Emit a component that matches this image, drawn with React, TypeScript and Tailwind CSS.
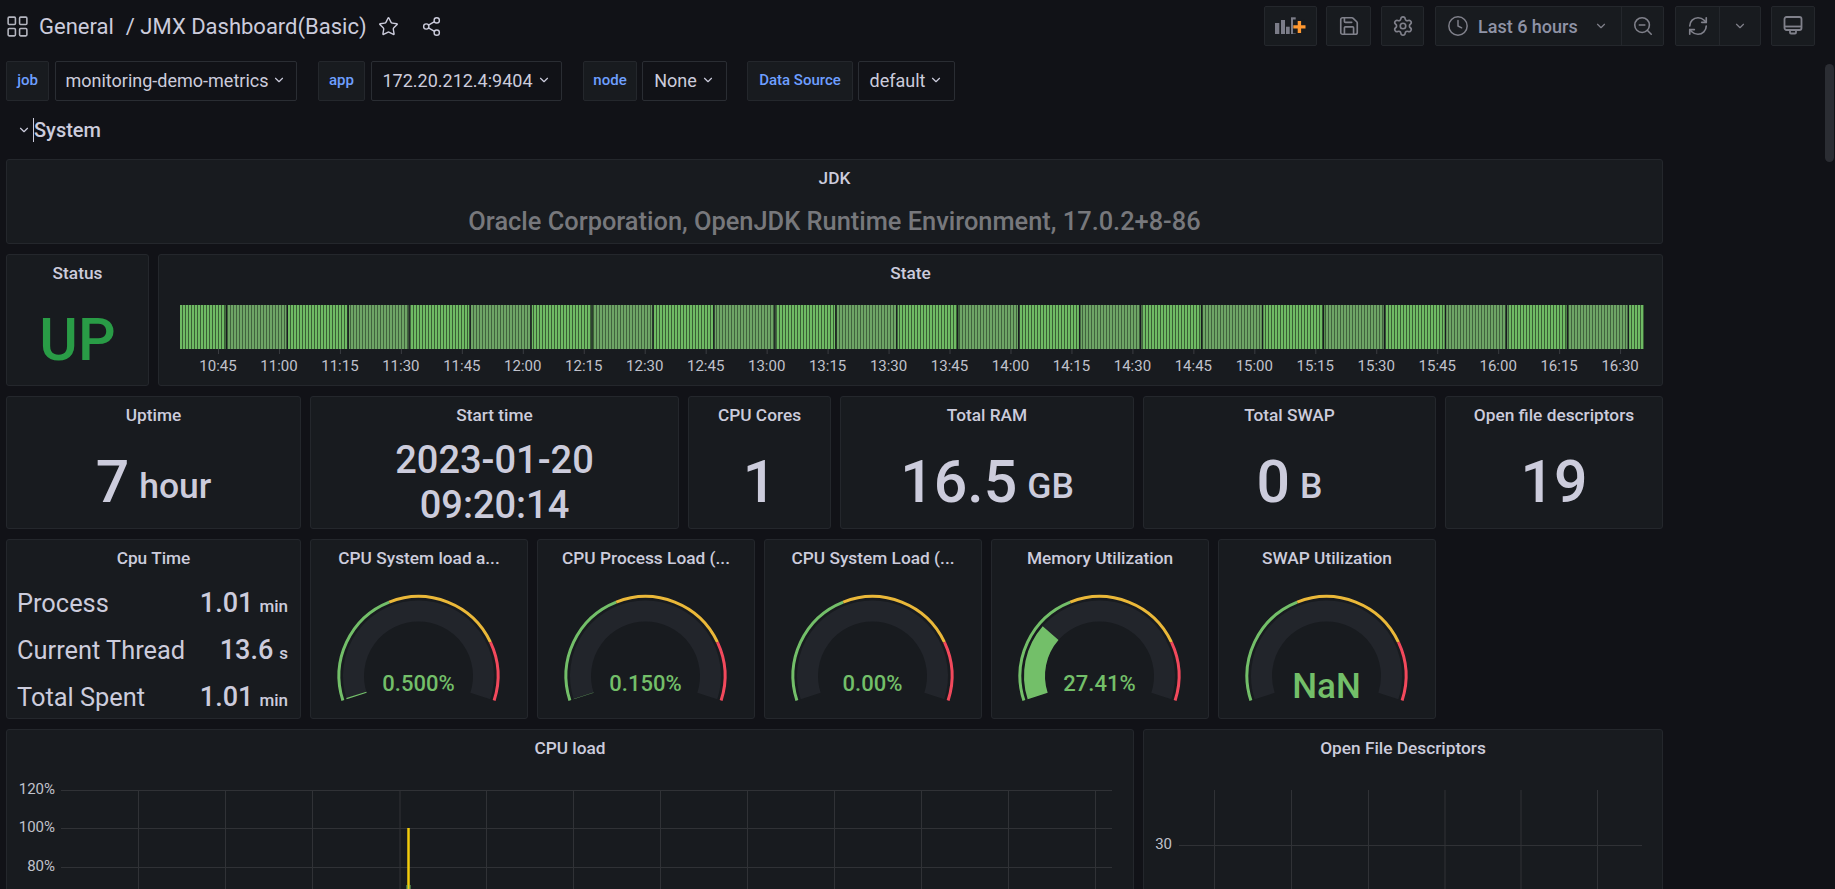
import React, { type FC, type ReactNode } from "react";
import { ChevronDown, LayoutGrid, RefreshCw, Save, Settings, Share2, Star, Clock, ZoomOut } from "lucide-react";

const times = ["10:45","11:00","11:15","11:30","11:45","12:00","12:15","12:30","12:45","13:00","13:15","13:30","13:45","14:00","14:15","14:30","14:45","15:00","15:15","15:30","15:45","16:00","16:15","16:30"];

const Panel: FC<{ title: string; className: string; children?: ReactNode }> = ({ title, className, children }) => (
  <div className={`flex flex-col overflow-hidden rounded-[3px] border border-[#24272c] bg-[#181b1f] ${className}`}>
    <div className="h-[38px] shrink-0 flex items-center justify-center text-[17.3px] font-medium text-[#ccccdc]">{title}</div>
    {children}
  </div>
);

const Stat: FC<{ title: string; className: string; value: string; unit?: string }> = ({ title, className, value, unit }) => (
  <Panel title={title} className={className}>
    <div className="flex-1 flex items-center justify-center font-medium text-[#ccccdc]">
      <span className="text-[59px] leading-none">{value}</span>
      {unit && <span className="ml-[10px] self-center mt-[11px] text-[35.5px] leading-none">{unit}</span>}
    </div>
  </Panel>
);

const CpuRow: FC<{ name: string; value: string; unit: string }> = ({ name, value, unit }) => (
  <div className="flex items-center justify-between h-[47px]">
    <span className="text-[25.4px] text-[#ccccdc]">{name}</span>
    <span className="font-medium text-[#ccccdc]">
      <span className="text-[27px]">{value}</span>
      <span className="ml-[6px] text-[17px]">{unit}</span>
    </span>
  </div>
);

const point = (r: number, deg: number) => {
  const a = (deg * Math.PI) / 180;
  return `${107.5 + r * Math.cos(a)} ${98 + r * Math.sin(a)}`;
};

const arc = (r: number, from: number, to: number) => {
  const a = 162 + 216 * from;
  const b = 162 + 216 * to;
  return `M${point(r, a)} A${r} ${r} 0 ${b - a > 180 ? 1 : 0} 1 ${point(r, b)}`;
};

const Gauge: FC<{ title: string; value: string; pct: number; big?: boolean }> = ({ title, value, pct, big }) => (
  <Panel title={title} className="w-[218px]">
    <svg width="216" height="140" className="shrink-0">
      <path d={arc(65, 0, 1)} fill="none" stroke="#22252b" strokeWidth="21" />
      {pct > 0 && <path d={arc(65, 0, pct)} fill="none" stroke="#73bf69" strokeWidth="21" />}
      <path d={arc(79.5, 0, 0.4)} fill="none" stroke="#73bf69" strokeWidth="3" />
      <path d={arc(79.5, 0.4, 0.8)} fill="none" stroke="#eab839" strokeWidth="3" />
      <path d={arc(79.5, 0.8, 1)} fill="none" stroke="#f2495c" strokeWidth="3" />
      <text
        x="107.5"
        y={big ? 108 : 105}
        textAnchor="middle"
        dominantBaseline="central"
        fill="#73bf69"
        className={big ? "text-[35px] font-medium" : "text-[22px] font-medium"}
      >
        {value}
      </text>
    </svg>
  </Panel>
);

const Timeline: FC = () => {
  const stripes = [];
  for (let x = 21; x < 1484; x += 3) {
    const seg = Math.floor((x - 67) / 60.96);
    const bright = seg % 2 !== 0;
    stripes.push(<rect key={x} x={x} y={12} width={3} height={44} fill={bright ? "#3a6035" : "#41633e"} />);
    stripes.push(<rect key={`s${x}`} x={x} y={12} width={2} height={44} fill={bright ? "#6fbb64" : "#6ea566"} />);
  }
  const seps = [];
  for (let i = 0; i < 24; i++) seps.push(<rect key={i} x={66.5 + i * 60.96} y={12} width={1.5} height={44} fill="#181b1f" />);
  return (
    <svg width="1503" height="92" className="shrink-0">
      {stripes}
      {seps}
      {times.map((t, i) => (
        <g key={t}>
          <rect x={59 + i * 60.96} y={56} width={1} height={5} fill="#3a3c41" />
          <text x={59 + i * 60.96} y={73} textAnchor="middle" dominantBaseline="central" fill="#c0c2cc" className="text-[15px]">
            {t}
          </text>
        </g>
      ))}
    </svg>
  );
};

const CpuChart: FC = () => {
  const rows = [
    { y: 22, label: "120%" },
    { y: 60, label: "100%" },
    { y: 99, label: "80%" },
  ];
  const cols = [131, 218, 305, 392.5, 479, 566, 653, 740, 827, 914, 1001, 1088];
  return (
    <svg width="1126" height="130" className="shrink-0">
      {rows.map((r) => (
        <g key={r.y}>
          <line x1="54" x2="1105" y1={r.y + 0.5} y2={r.y + 0.5} stroke="#303236" />
          <text x="48" y={r.y - 1} textAnchor="end" dominantBaseline="central" fill="#c0c2cc" className="text-[15px]">
            {r.label}
          </text>
        </g>
      ))}
      {cols.map((x) => (
        <line key={x} x1={x + 0.5} x2={x + 0.5} y1="22" y2="130" stroke="#303236" />
      ))}
      <line x1="401.5" x2="401.5" y1="60" y2="130" stroke="#f2cc0c" strokeWidth="2.5" />
      <line x1="400" x2="400" y1="117" y2="130" stroke="#73bf69" strokeWidth="1" />
      <line x1="403" x2="403" y1="117" y2="130" stroke="#73bf69" strokeWidth="1" />
    </svg>
  );
};

const FileChart: FC = () => (
  <svg width="518" height="130" className="shrink-0">
    <line x1="35" x2="498" y1="77.5" y2="77.5" stroke="#303236" />
    {[70, 147, 224, 300.5, 376.5, 453].map((x) => (
      <line key={x} x1={x + 0.5} x2={x + 0.5} y1="22" y2="130" stroke="#303236" />
    ))}
    <text x="28" y="76" textAnchor="end" dominantBaseline="central" fill="#c0c2cc" className="text-[15px]">
      30
    </text>
  </svg>
);

const VarItem: FC<{ label: string; value: string; className: string; labelW: string; selectW: string }> = ({ label, value, className, labelW, selectW }) => (
  <div className={`flex h-[40px] ${className}`}>
    <div className={`flex items-center justify-center pb-[2px] rounded-[2px] border border-[#24272c] bg-[#181b1f] text-[15px] font-medium text-[#6e9fff] ${labelW}`}>{label}</div>
    <div className={`ml-auto flex items-center justify-center gap-[4px] pb-[2px] rounded-[2px] border border-[#2a2d33] text-[18px] text-[#ccccdc] ${selectW}`}>
      {value}
      <ChevronDown size={14} strokeWidth={2} />
    </div>
  </div>
);

const btn = "flex items-center justify-center h-[40px] rounded-[2px] border border-[#24272c] bg-[#181b1f] text-[#80818b]";

const App: FC = () => {
  return (
    <div className="relative h-[889px] overflow-hidden bg-[#111217] font-['Roboto',sans-serif]">
      <div className="flex items-center h-[46px] pt-[6px] pl-[5px] pr-[20px] text-[#ccccdc]">
        <LayoutGrid size={25} strokeWidth={1.5} className="text-[#b5b6c0]" />
        <span className="ml-[9px] text-[22px]">General</span>
        <span className="ml-[12px] text-[22px]">/ JMX Dashboard(Basic)</span>
        <Star size={21} strokeWidth={1.6} className="ml-[11px]" />
        <Share2 size={21} strokeWidth={1.6} className="ml-[22px]" />
        <div className="ml-auto flex">
          <div className={`${btn} w-[53px]`}>
            <svg width="51" height="38" viewBox="1 1 51 38">
              <rect x="11" y="17" width="4.3" height="11" fill="#7b7c88" />
              <rect x="17" y="14" width="4" height="14" fill="#7b7c88" />
              <rect x="22" y="20.7" width="3.7" height="7.3" fill="#7b7c88" />
              <rect x="27" y="11.3" width="4.7" height="16.7" fill="#7b7c88" />
              <rect x="29" y="13.5" width="12" height="14" fill="#181b1f" />
              <path d="M33.7 15h3.4v4.2h4.4v3.4h-4.4v4.4h-3.4v-4.4h-4.4v-3.4h4.4z" fill="#ff9830" />
            </svg>
          </div>
          <div className={`${btn} w-[45px] ml-[9px]`}>
            <Save size={22} strokeWidth={1.8} />
          </div>
          <div className={`${btn} w-[43px] ml-[10px]`}>
            <Settings size={22} strokeWidth={1.8} />
          </div>
          <div className={`${btn} w-[229px] ml-[11px] justify-start`}>
            <div className="flex items-center w-[186px] pl-[11px] border-r border-[#24272c] h-full">
              <Clock size={22} strokeWidth={1.6} />
              <span className="ml-[9px] text-[18px] font-medium text-[#8f93a6]">Last 6 hours</span>
              <ChevronDown size={14} strokeWidth={2} className="ml-[16px]" />
            </div>
            <div className="flex-1 flex items-center justify-center">
              <ZoomOut size={22} strokeWidth={1.7} />
            </div>
          </div>
          <div className={`${btn} w-[86px] ml-[11px] justify-start`}>
            <div className="flex items-center justify-center w-[44px] border-r border-[#24272c] h-full">
              <RefreshCw size={22} strokeWidth={1.8} />
            </div>
            <div className="flex-1 flex items-center justify-center">
              <ChevronDown size={14} strokeWidth={2} />
            </div>
          </div>
          <div className={`${btn} w-[44px] ml-[10px]`}>
            <svg width="24" height="24" viewBox="0 0 24 24" fill="none" stroke="currentColor" strokeWidth="1.8">
              <rect x="3.5" y="3" width="17" height="13" rx="2" />
              <line x1="3.5" x2="20.5" y1="12.5" y2="12.5" />
              <path d="M9 16v2.5a1 1 0 0 0 1 1h4a1 1 0 0 0 1-1V16" />
            </svg>
          </div>
        </div>
      </div>

      <div className="flex mt-[15px] pl-[6px] gap-[21px]">
        <VarItem label="job" value="monitoring-demo-metrics" className="w-[291px]" labelW="w-[43px]" selectW="w-[242px]" />
        <VarItem label="app" value="172.20.212.4:9404" className="w-[244px]" labelW="w-[47px]" selectW="w-[191px]" />
        <VarItem label="node" value="None" className="w-[144px] mr-[-1px]" labelW="w-[54px]" selectW="w-[85px]" />
        <VarItem label="Data Source" value="default" className="w-[208px]" labelW="w-[106px]" selectW="w-[97px]" />
      </div>

      <div className="flex items-center h-[40px] mt-[9px] pl-[17px] text-[#ccccdc]">
        <ChevronDown size={14} strokeWidth={2} />
        <span className="ml-[2px] w-px h-[24px] bg-[#ccccdc]" />
        <span className="text-[20px] font-medium">System</span>
      </div>

      <div className="flex flex-col gap-[10px] w-[1663px] pl-[6px] mt-[9px]">
        <Panel title="JDK" className="h-[85px]">
          <div className="flex-1 flex items-center justify-center pt-[2px] text-[25.4px] font-medium text-[#77787c]">
            Oracle Corporation, OpenJDK Runtime Environment, 17.0.2+8-86
          </div>
        </Panel>

        <div className="flex gap-[9px] h-[132px]">
          <Panel title="Status" className="w-[143px]">
            <div className="flex-1 flex items-center justify-center pt-[1px] text-[59px] font-medium leading-none text-[#299c46]">UP</div>
          </Panel>
          <Panel title="State" className="w-[1505px]">
            <Timeline />
          </Panel>
        </div>

        <div className="flex gap-[9px] h-[133px]">
          <Stat title="Uptime" className="w-[295px]" value="7" unit="hour" />
          <Panel title="Start time" className="w-[369px]">
            <div className="flex-1 flex flex-col items-center justify-center pt-[2px] text-[38px] leading-[45px] font-medium text-[#ccccdc]">
              <span>2023-01-20</span>
              <span>09:20:14</span>
            </div>
          </Panel>
          <Stat title="CPU Cores" className="w-[143px]" value="1" />
          <Stat title="Total RAM" className="w-[294px]" value="16.5" unit="GB" />
          <Stat title="Total SWAP" className="w-[293px]" value="0" unit="B" />
          <Stat title="Open file descriptors" className="w-[218px]" value="19" />
        </div>

        <div className="flex gap-[9px] h-[180px]">
          <Panel title="Cpu Time" className="w-[295px]">
            <div className="pl-[10px] pr-[12px] pt-[2px]">
              <CpuRow name="Process" value="1.01" unit="min" />
              <CpuRow name="Current Thread" value="13.6" unit="s" />
              <CpuRow name="Total Spent" value="1.01" unit="min" />
            </div>
          </Panel>
          <Gauge title="CPU System load a..." value="0.500%" pct={0.005} />
          <Gauge title="CPU Process Load (..." value="0.150%" pct={0.0015} />
          <Gauge title="CPU System Load (..." value="0.00%" pct={0} />
          <Gauge title="Memory Utilization" value="27.41%" pct={0.2741} />
          <Gauge title="SWAP Utilization" value="NaN" pct={0} big />
        </div>

        <div className="flex gap-[9px] h-[300px]">
          <Panel title="CPU load" className="w-[1128px]">
            <CpuChart />
          </Panel>
          <Panel title="Open File Descriptors" className="w-[520px]">
            <FileChart />
          </Panel>
        </div>
      </div>

      <div className="absolute right-[1px] top-[64px] w-[9px] h-[98px] rounded-full bg-[#2b2d33]" />
    </div>
  );
};

export default App;
